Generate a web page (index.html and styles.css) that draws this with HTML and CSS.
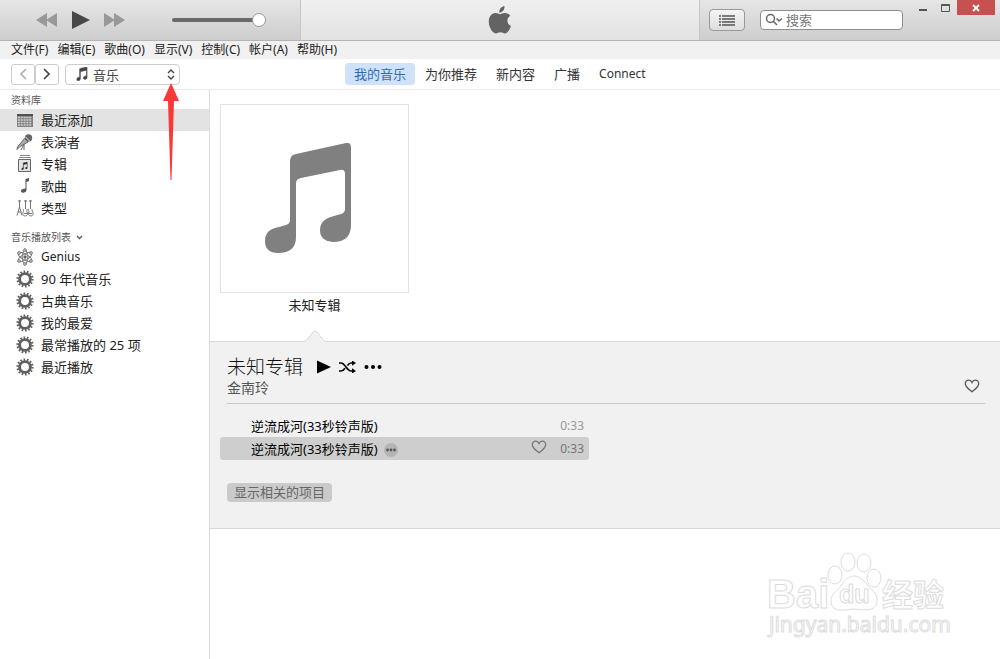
FILE: index.html
```html
<!DOCTYPE html>
<html lang="zh-CN">
<head>
    <meta charset="UTF-8">
    <meta name="viewport" content="width=device-width, initial-scale=1.0">
    <title>iTunes</title>
    <link rel="stylesheet" href="styles.css">
</head>
<body>

    <!-- shared icons -->
    <svg class="defs" width="0" height="0">
        <symbol id="gear" viewBox="0 0 18 18">
            <circle cx="9" cy="9" r="7.4" fill="none" stroke="#606060" stroke-width="2.400" stroke-dasharray="1.600 1.721"/>
            <circle cx="9" cy="9" r="5.400" fill="none" stroke="#606060" stroke-width="2.900"/>
        </symbol>
        <symbol id="heart" viewBox="0 0 16 14">
            <path d="M8 12.8C5 10.3 1.3 7.8 1.3 4.7C1.3 2.6 2.8 1.2 4.7 1.2C6.2 1.2 7.4 2.1 8 3.4C8.600 2.100 9.800 1.200 11.300 1.200C13.200 1.200 14.700 2.600 14.700 4.700C14.700 7.800 11 10.300 8 12.800Z" fill="none" stroke="currentColor" stroke-width="1.3"/>
        </symbol>
        <symbol id="notes" viewBox="0 0 88 112">
            <path d="M25 18Q25 12 31 11L81 0Q86 -1 86 5V82Q86 99 68 99Q55 98 55 87Q55 76 69 73L76 71Q80 70 80 66V31Q80 26 75 27L36 35Q31 36 31 40V94Q31 110 13 110Q0 110 0 98Q0 86 14 84L21 82Q25 81 25 77Z" fill="currentColor"/>
        </symbol>
    </svg>

    <header class="titlebar">
        <div class="player">
            <button class="plain" aria-label="上一首"><svg width="22" height="14"><path d="M11 0V14L0 7ZM21 0V14L10 7Z" fill="#999"/></svg></button>
            <button class="plain" aria-label="播放"><svg width="18" height="20"><path d="M0 1L18 10L0 19Z" fill="#484848"/></svg></button>
            <button class="plain" aria-label="下一首"><svg width="22" height="14"><path d="M0 0V14L11 7ZM10 0V14L21 7Z" fill="#999"/></svg></button>
            <input class="volume" type="range" min="0" max="100" value="100" aria-label="音量">
        </div>
        <div class="display">
            <svg width="24" height="28" viewBox="0 0 24 28"><path d="M16.500 0C16.700 3.600 14.200 6.700 11.300 6.500C11 3.300 13.500 0.400 16.500 0ZM12 8.200C13.200 8.200 14.400 7 17 7C19.300 7 21.300 8.200 22.400 9.800C18 12.300 18.700 18.200 23 19.900C21.700 23.200 19.600 27.400 17 27.400C15.200 27.400 14.500 26.300 12.400 26.300C10.200 26.300 9.400 27.400 7.800 27.400C4.600 27.400 0.800 21.600 0.800 15.600C0.800 10.300 4.100 7.100 7.600 7.100C9.500 7.100 11 8.200 12 8.200Z" fill="#636363"/></svg>
        </div>
        <div class="tools">
            <button class="list_btn" aria-label="列表"><svg width="16" height="11"><path d="M0 1H2M3 1H16M0 4H2M3 4H16M0 7H2M3 7H16M0 10H2M3 10H16" stroke="#555" stroke-width="1.500"/></svg></button>
            <label class="search">
                <svg width="18" height="14" fill="none" stroke="#666" stroke-width="1.500"><circle cx="5.500" cy="5.500" r="4"/><path d="M8.500 8.500L12 12M11.500 5.500L14 8L17 5.500"/></svg>
                <input type="text" placeholder="搜索" aria-label="搜索">
            </label>
            <div class="window_btns">
                <button class="plain" aria-label="最小化"><svg width="8" height="14"><path d="M0 10H8" stroke="#555" stroke-width="2"/></svg></button>
                <button class="plain" aria-label="最大化"><svg width="9" height="14"><path d="M0.500 4.500H8.500V11.500H0.500ZM0 5.500H9" fill="none" stroke="#555"/></svg></button>
                <button class="close" aria-label="关闭"><svg width="8" height="8"><path d="M1 1L7 7M7 1L1 7" stroke="#fff" stroke-width="1.800"/></svg></button>
            </div>
        </div>
    </header>

    <nav class="menu">
        <button>文件(F)</button>
        <button>编辑(E)</button>
        <button>歌曲(O)</button>
        <button>显示(V)</button>
        <button>控制(C)</button>
        <button>帐户(A)</button>
        <button>帮助(H)</button>
    </nav>

    <div class="navbar">
        <div class="nav_left">
            <div class="history">
                <button class="back" aria-label="后退"><svg width="8" height="12"><path d="M7 1L2 6L7 11" fill="none" stroke="currentColor" stroke-width="1.500"/></svg></button>
                <button class="forward" aria-label="前进"><svg width="8" height="12"><path d="M1 1L6 6L1 11" fill="none" stroke="currentColor" stroke-width="1.700"/></svg></button>
            </div>
            <div class="media">
                <svg width="12" height="14" viewBox="0 0 88 112"><use href="#notes" stroke="#555" stroke-width="5"/></svg>
                <select aria-label="媒体类型">
                    <option>音乐</option>
                </select>
                <svg width="8" height="11"><path d="M1 4L4 1L7 4M1 7L4 10L7 7" fill="none" stroke="#444" stroke-width="1.400"/></svg>
            </div>
        </div>
        <nav class="tabs">
            <a href="#" class="active">我的音乐</a>
            <a href="#">为你推荐</a>
            <a href="#">新内容</a>
            <a href="#">广播</a>
            <a href="#" class="latin">Connect</a>
        </nav>
    </div>

    <div class="main">
        <aside class="sidebar">
            <h3>资料库</h3>
            <ul>
                <li><a href="#" class="active">
                    <svg width="18" height="18"><path d="M1 3H17V16H1Z" fill="#808080"/><path d="M1 3H17V5H1Z" fill="#505050"/><path d="M2 6.500H16M2 9H16M2 11.500H16M2 14H16" stroke="#d0d0d0" stroke-width="1.600" stroke-dasharray="2 0.800"/></svg>
                    最近添加</a></li>
                <li><a href="#">
                    <svg width="18" height="18"><circle cx="12.500" cy="5" r="3.700" fill="#666"/><path d="M9 3.500L14.500 9" stroke="#ddd"/><path d="M8.500 5.500L12 9L4 13.500L1 16.500L1.500 14ZM8 11V17M8 11L5 17" fill="#aaa" stroke="#666"/></svg>
                    表演者</a></li>
                <li><a href="#">
                    <svg width="18" height="18"><path d="M4 0.500H14M3 2.500H15" stroke="#888"/><path d="M2.500 4.500H14.500V16.500H2.500Z" fill="#e4e4e4" stroke="#666"/><svg x="5" y="7" width="7" height="8" viewBox="0 0 88 112"><use href="#notes" stroke="#555" stroke-width="5"/></svg></svg>
                    专辑</a></li>
                <li><a href="#">
                    <svg width="18" height="18"><path d="M9.500 2L13 1V4L10.500 5V13C10.500 16 5 17 5 14C5 12 7 12 9.500 11.500Z" fill="#555"/></svg>
                    歌曲</a></li>
                <li><a href="#">
                    <svg width="18" height="18" fill="none" stroke="#777"><path d="M3.500 1V9M9.500 1V10M14.500 1V10M2 2H5M8 2H11M13 2H16M3.500 8L1 16.500M3.500 8L6 16.500M2 13H5.500M8 10C6 11 8.500 12 7 13.500C5.500 18 12.500 18 11.500 14C10 12 12 11 10.500 10M13 10C11.500 11 14 12 12.500 14C12 18 18 18 17 14C15.500 12 17 11 15.500 10M8 14.500H11M13 14.500H16"/></svg>
                    类型</a></li>
            </ul>
            <h3 class="playlists">音乐播放列表 <svg width="7" height="5"><path d="M1 1L3.500 3.500L6 1" fill="none" stroke="#555" stroke-width="1.300"/></svg></h3>
            <ul>
                <li><a href="#">
                    <svg width="18" height="18" fill="none" stroke="#777"><ellipse cx="9" cy="9" rx="2.800" ry="7"/><ellipse cx="9" cy="9" rx="2.800" ry="7.500" transform="rotate(60 9 9)"/><ellipse cx="9" cy="9" rx="2.800" ry="7.500" transform="rotate(120 9 9)"/><g fill="#fff" stroke="#666"><circle cx="9" cy="9" r="1.200" fill="#666"/><circle cx="9" cy="2" r="1.300"/><circle cx="3" cy="5" r="1.300"/><circle cx="15" cy="5" r="1.300"/><circle cx="3" cy="13" r="1.300"/><circle cx="15" cy="13" r="1.300"/><circle cx="9" cy="16" r="1.300"/></g></svg>
                    <span class="latin">Genius</span></a></li>
                <li><a href="#"><svg width="18" height="18"><use href="#gear"/></svg>90 年代音乐</a></li>
                <li><a href="#"><svg width="18" height="18"><use href="#gear"/></svg>古典音乐</a></li>
                <li><a href="#"><svg width="18" height="18"><use href="#gear"/></svg>我的最爱</a></li>
                <li><a href="#"><svg width="18" height="18"><use href="#gear"/></svg>最常播放的 25 项</a></li>
                <li><a href="#"><svg width="18" height="18"><use href="#gear"/></svg>最近播放</a></li>
            </ul>
        </aside>

        <main class="content">
            <div class="albums">
                <figure class="album">
                    <div class="cover"><svg width="88" height="112"><use href="#notes"/></svg></div>
                    <figcaption>未知专辑</figcaption>
                    <svg class="pointer" width="22" height="12"><path d="M0 12Q2 11 3 10L9 2Q11 0 13 2L19 10Q20 11 22 12Z" fill="#f1f1f1"/><path d="M0 11.500Q2 11 3 9.500L9 2Q11 0 13 2L19 9.500Q20 11 22 11.500" fill="none" stroke="#d8d8d8"/></svg>
                </figure>
            </div>

            <section class="detail">
                <div class="detail_head">
                    <div>
                        <div class="title_row">
                            <h2>未知专辑</h2>
                            <button class="plain" aria-label="播放专辑"><svg width="14" height="14"><path d="M0 0.500L14 7L0 13.500Z"/></svg></button>
                            <button class="plain" aria-label="随机播放"><svg width="17" height="12"><path d="M0 2H2C6 2 8 10 12 10H14M0 10H2C4 10 5 8.500 6 7.200M8.500 4.500C9.500 3 10.500 2 12 2H14" fill="none" stroke="#000" stroke-width="1.700"/><path d="M13 -0.500L17 2L13 4.700ZM13 7.300L17 10L13 12.500Z"/></svg></button>
                            <button class="plain" aria-label="更多"><svg width="18" height="6"><circle cx="2.500" cy="3" r="2"/><circle cx="9" cy="3" r="2"/><circle cx="15.500" cy="3" r="2"/></svg></button>
                        </div>
                        <p class="artist">金南玲</p>
                    </div>
                    <button class="plain love" aria-label="喜爱"><svg width="16" height="14"><use href="#heart"/></svg></button>
                </div>

                <table class="songs">
                    <tr>
                        <td class="name">逆流成河(33秒铃声版)</td>
                        <td class="like"></td>
                        <td class="time">0:33</td>
                    </tr>
                    <tr class="selected">
                        <td class="name">逆流成河(33秒铃声版)<button class="plain more" aria-label="更多"><svg width="14" height="14"><circle cx="7" cy="7" r="7" fill="#b4b4b4"/><circle cx="3.500" cy="7" r="1.400" fill="#555"/><circle cx="7" cy="7" r="1.400" fill="#555"/><circle cx="10.500" cy="7" r="1.400" fill="#555"/></svg></button></td>
                        <td class="like"><button class="plain" aria-label="喜爱"><svg width="16" height="14"><use href="#heart"/></svg></button></td>
                        <td class="time">0:33</td>
                    </tr>
                </table>

                <button class="related">显示相关的项目</button>
            </section>
        </main>
    </div>

    <svg class="arrow" width="16" height="98"><path d="M8 0L16 18H11L8.500 97H7.500L5 18H0Z" fill="#fb3838"/></svg>

    <svg class="watermark" width="190" height="100">
        <g fill="#fff" stroke="#dcdcdc">
            <text class="wm_bai" x="5" y="63">Bai</text>
            <ellipse cx="73" cy="30" rx="7" ry="9"/>
            <ellipse cx="86" cy="17" rx="7" ry="9"/>
            <ellipse cx="102" cy="18" rx="7" ry="9"/>
            <ellipse cx="112" cy="33" rx="7" ry="9"/>
            <path d="M92 31C99 31 103 37 107 42C112 47 116 50 115 57C114 65 106 66 92 64C78 66 70 66 69 57C68 50 74 47 78 42C82 37 85 31 92 31Z"/>
            <text class="wm_du" x="77" y="58">du</text>
            <text class="wm_jy" x="120" y="61">经验</text>
            <text class="wm_url" x="7" y="87">jingyan.baidu.com</text>
        </g>
    </svg>

</body>
</html>
```

FILE: styles.css
```css
* {
    box-sizing: border-box;
}

body {
    margin: 0;
    min-height: 100vh;
    display: flex;
    flex-direction: column;
    position: relative;
    background: #fff;
    color: #222;
    font-family: "Noto Sans", "Noto Sans CJK SC", sans-serif;
    font-size: 13px;
    line-height: 20px;
}

h2, h3, p, ul, figure {
    margin: 0;
    padding: 0;
    font-weight: normal;
}

ul {
    list-style: none;
}

a {
    color: inherit;
    text-decoration: none;
}

svg {
    display: block;
    flex: none;
}

button, input, select {
    font: inherit;
    color: inherit;
}

button {
    padding: 0;
}

.defs {
    position: absolute;
}

.plain {
    border: none;
    background: none;
}

.latin {
    font-size: 12px;
}

/* title bar */
.titlebar {
    display: grid;
    grid-template-columns: minmax(0, 3fr) minmax(0, 4fr) minmax(0, 3fr);
    height: 41px;
    border-bottom: 1px solid #b3b3b3;
    background: linear-gradient(#e6e6e6, #cdcdcd);
}

.player {
    display: flex;
    align-items: center;
    gap: 14px;
    padding-left: 36px;
}

.volume {
    appearance: none;
    width: 94px;
    height: 16px;
    margin: 0 0 0 32px;
    background: none;
}

.volume::-webkit-slider-runnable-track {
    height: 4px;
    border-radius: 2px;
    background: #6a6a6a;
}

.volume::-webkit-slider-thumb {
    appearance: none;
    width: 14px;
    height: 14px;
    margin-top: -5px;
    border: 1px solid #999;
    border-radius: 50%;
    background: #fff;
}

.display {
    display: flex;
    justify-content: center;
    align-items: center;
    border: solid #c6c6c6;
    border-width: 0 1px;
    background: linear-gradient(#f0f0f0, #e2e2e2);
}

.tools {
    display: flex;
    align-items: center;
    padding-left: 9px;
}

.list_btn {
    display: flex;
    flex: none;
    justify-content: center;
    align-items: center;
    width: 36px;
    height: 22px;
    border: 1px solid #999;
    border-radius: 4px;
    background: linear-gradient(#f4f4f4, #dedede);
}

.search {
    display: flex;
    align-items: center;
    flex: 1;
    min-width: 0;
    height: 20px;
    margin: 0 16px 0 15px;
    padding-left: 4px;
    gap: 3px;
    border: 1px solid #8e8e8e;
    border-radius: 4px;
    background: #fff;
}

.search input {
    flex: 1;
    min-width: 0;
    height: 18px;
    padding: 0;
    border: none;
    outline: none;
    background: none;
}

.search input::placeholder {
    color: #777;
}

.window_btns {
    display: flex;
    align-items: flex-start;
    align-self: flex-start;
    gap: 14px;
    padding-right: 5px;
}

.close {
    display: flex;
    justify-content: center;
    align-items: center;
    width: 38px;
    height: 15px;
    margin-left: -7px;
    border: none;
    background: #c75050;
}

/* menu */
.menu {
    display: flex;
    gap: 9px;
    height: 18px;
    padding-left: 11px;
    background: #f1f1f1;
}

.menu button {
    border: none;
    background: none;
    font-size: 12px;
    line-height: 16px;
}

/* navigation */
.navbar {
    display: flex;
    align-items: center;
    height: 31px;
    border-bottom: 1px solid #ebebeb;
}

.nav_left {
    display: flex;
    gap: 6px;
    width: 345px;
    padding-left: 11px;
}

.history {
    display: flex;
}

.history button {
    display: flex;
    justify-content: center;
    align-items: center;
    width: 24px;
    height: 21px;
    border: 1px solid #ccc;
    border-radius: 3px;
    background: #fff;
}

.history .back {
    color: #aaa;
}

.history .forward {
    color: #444;
}

.media {
    display: flex;
    align-items: center;
    width: 115px;
    height: 21px;
    padding: 0 4px 0 10px;
    gap: 5px;
    border: 1px solid #ccc;
    border-radius: 4px;
    color: #444;
}

.media select {
    appearance: none;
    flex: 1;
    height: 19px;
    padding: 0 0 2px;
    border: none;
    background: none;
}

.tabs {
    display: flex;
    color: #333;
}

.tabs a {
    padding: 1px 9px;
    border-radius: 4px;
}

.tabs a + a {
    margin-left: 1px;
}

.tabs .active {
    background: #cfe2f8;
    color: #2f6bb5;
}

/* main */
.main {
    display: flex;
    flex: 1;
}

.sidebar {
    width: 210px;
    border-right: 1px solid #dcdcdc;
}

.sidebar h3 {
    display: flex;
    align-items: center;
    gap: 5px;
    height: 19px;
    padding-left: 11px;
    color: #555;
    font-size: 10px;
}

.sidebar .playlists {
    height: 18px;
    margin-top: 9px;
}

.sidebar li a {
    display: flex;
    align-items: center;
    gap: 7px;
    height: 22px;
    padding-left: 16px;
}

.sidebar .active {
    background: #e3e3e3;
}

.content {
    flex: 1;
    min-width: 0;
}

.albums {
    display: flex;
    padding: 14px 10px 0;
}

.album {
    display: flex;
    flex-direction: column;
    align-items: center;
    width: 189px;
}

.cover {
    display: flex;
    justify-content: center;
    align-items: center;
    width: 100%;
    aspect-ratio: 1;
    padding-right: 12px;
    border: 1px solid #e2e2e2;
    color: #808080;
}

.album figcaption {
    margin: 2px 0 15px;
}

.pointer {
    position: relative;
    margin-bottom: -1px;
}

.detail {
    padding: 14px 15px 26px 10px;
    border: solid #d8d8d8;
    border-width: 1px 0;
    background: #f1f1f1;
}

.detail_head {
    display: flex;
    justify-content: space-between;
    align-items: flex-end;
    margin: 0 0 10px 7px;
    padding-bottom: 5px;
    border-bottom: 1px solid #c8c8c8;
}

.title_row {
    display: flex;
    align-items: center;
    gap: 8px;
    height: 22px;
}

.title_row h2 {
    margin-right: 6px;
    color: #111;
    font-size: 19px;
    font-weight: 300;
}

.artist {
    color: #555;
    font-size: 14px;
}

.love {
    margin: 0 5px 5px 0;
    color: #555;
}

.songs {
    width: 49%;
    max-width: 369px;
    border-spacing: 0;
    color: #000;
}

.songs td {
    height: 23px;
    padding: 0;
    line-height: 20px;
}

.songs .name {
    padding-left: 31px;
}

.songs .like {
    width: 26px;
    color: #777;
}

.songs .time {
    width: 32px;
    padding-right: 5px;
    color: #999;
    font-size: 12px;
    text-align: right;
}

.songs .selected td {
    background: #cecece;
}

.songs .selected td:first-child {
    border-radius: 3px 0 0 3px;
}

.songs .selected td:last-child {
    border-radius: 0 3px 3px 0;
    color: #777;
}

.more {
    display: inline-block;
    margin-left: 6px;
    vertical-align: middle;
}

.related {
    height: 19px;
    margin: 23px 0 0 7px;
    padding: 0 7px;
    border: none;
    border-radius: 4px;
    background: #cacaca;
    color: #666;
    line-height: 19px;
}

/* overlays */
.arrow {
    position: absolute;
    left: 163px;
    top: 83px;
}

.watermark {
    position: absolute;
    right: 48px;
    bottom: 14px;
}

.wm_bai {
    font: bold 40px "Liberation Sans", sans-serif;
}

.wm_du {
    font: bold 25px "Liberation Sans", sans-serif;
}

.wm_jy {
    font: bold 31px "Noto Sans CJK SC", sans-serif;
}

.wm_url {
    font: 21px "Noto Sans", sans-serif;
}
```
